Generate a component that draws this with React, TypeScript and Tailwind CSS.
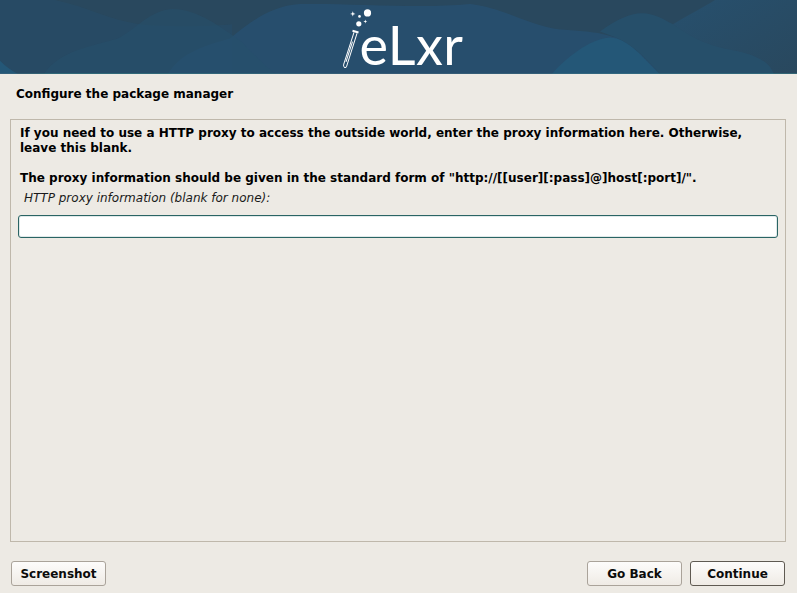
import React from 'react';

function Banner() {
  return (
    <svg className="absolute inset-0 w-full h-full" viewBox="0 0 797 73" preserveAspectRatio="none">
      <defs>
        <linearGradient id="line" x1="0" x2="1" y1="0" y2="0">
          <stop offset="0" stopColor="#4d6b80" />
          <stop offset="0.07" stopColor="#3f8f8f" />
          <stop offset="0.18" stopColor="#3f8f8f" />
          <stop offset="0.5" stopColor="#4d6b80" />
          <stop offset="1" stopColor="#3f8f95" />
        </linearGradient>
        <linearGradient id="right" x1="0" x2="1" y1="0" y2="1">
          <stop offset="0" stopColor="#25567a" stopOpacity="0.55" />
          <stop offset="1" stopColor="#25567a" stopOpacity="0" />
        </linearGradient>
      </defs>
      <rect width="797" height="73" fill="#29485e" />
      {/* top left wave */}
      <path d="M0 0 L55 0 C85 6 110 20 140 24 C170 27 210 26 232 24 L232 73 L0 73 Z" fill="#26516f" fillOpacity="0.35" />
      {/* wide hill in the middle */}
      <path d="M168 73 C180 52 205 45 230 38 C250 22 270 6 300 4 C350 3 420 9 470 4 C505 8 530 26 560 29 C590 31 600 32 616 37 C635 45 650 62 660 73 Z" fill="#26547a" fillOpacity="0.55" />
      {/* left hill */}
      <path d="M44 73 C60 50 90 46 118 38 C135 30 150 10 172 9 C198 9 222 28 240 40 C252 52 265 66 276 73 Z" fill="#26506c" fillOpacity="0.55" />
      <path d="M552 73 C565 58 590 38 610 37 C630 38 645 60 660 73 Z" fill="#245777" />
      <path d="M0 60 C6 66 12 70 18 73 L0 73 Z" fill="#245777" />
      {/* right hills */}
      <path d="M600 31 C615 20 630 13 642 13 C655 13 665 20 673 24 C690 36 705 44 725 48 C750 52 768 58 774 73 L660 73 C650 62 635 45 616 37 Z" fill="#26516f" fillOpacity="0.75" />
      <path d="M673 24 C690 14 705 6 715 0 L797 0 L797 73 L774 73 C768 58 750 52 725 48 C705 44 690 36 673 24 Z" fill="url(#right)" />
      <rect y="72.6" width="797" height="1" fill="url(#line)" />
      {/* test tube */}
      <path d="M354 32 L343.7 63.5 C342.8 66.5 345.6 67.6 346.6 65.5 L357 33" stroke="#fff" strokeWidth="1" fill="none" />
      <path d="M346 61 L352.5 41" stroke="#fff" strokeWidth="1" fill="none" />
      <path d="M352.5 30.3 L358.5 32" stroke="#fff" strokeWidth="2" fill="none" />
      {/* bubbles */}
      <g fill="#fff">
        <circle cx="367.5" cy="12.8" r="3.6" />
        <circle cx="358.8" cy="23.5" r="2.6" />
        <circle cx="359.5" cy="16.2" r="1.3" />
        <path d="M352.8 11 L353.5 13 L355.5 13.7 L353.5 14.4 L352.8 16.4 L352.1 14.4 L350.1 13.7 L352.1 13 Z" />
        <path d="M365.3 19.3 L365.8 20.8 L367.3 21.3 L365.8 21.8 L365.3 23.3 L364.8 21.8 L363.3 21.3 L364.8 20.8 Z" />
      </g>
    </svg>
  );
}

function Btn({ label, className, dark }: { label: string; className: string; dark?: boolean }) {
  return (
    <button
      className={`h-[25px] rounded-[3px] border bg-gradient-to-b from-[#fdfcfb] to-[#efebe5] text-[12px] font-bold text-[#0b0b0b] ${
        dark ? 'border-[#5f5a52]' : 'border-[#aaa39a]'
      } ${className}`}
    >
      {label}
    </button>
  );
}

export default function App() {
  return (
    <div className="w-[797px] h-[593px] overflow-hidden flex flex-col bg-[#edeae4] font-['DejaVu_Sans',sans-serif] text-[12px] text-black">
      <header className="relative h-[74px] shrink-0 flex justify-center">
        <Banner />
        <span className="relative ml-[26px] mt-[15px] h-[58px] leading-[60px] text-[54px] text-white font-['Lato',sans-serif] tracking-[0.5px]">
          eLxr
        </span>
      </header>

      <h1 className="font-bold text-[12px] leading-4 ml-4 mt-[12px]">Configure the package manager</h1>

      <main className="mx-[10px] mt-[17px] w-[776px] h-[423px] shrink-0 border border-[#bfb8ab] pl-[7px] pr-[7px] pt-[5px]">
        <p className="font-bold leading-[15px] ml-[2px] mt-[1px]">
          If you need to use a HTTP proxy to access the outside world, enter the proxy information here. Otherwise,
          <br />
          leave this blank.
        </p>
        <p className="font-bold leading-[15px] ml-[2px] mt-[15px]">
          The proxy information should be given in the standard form of "http://[[user][:pass]@]host[:port]/".
        </p>
        <label className="block italic text-[12px] leading-[15px] ml-[6px] mt-[5px] text-[#1a1a1a]">
          HTTP proxy information (blank for none):
        </label>
        <input
          type="text"
          className="block mt-[9px] w-[760px] h-[23px] bg-white rounded-[3px] border border-[#2a6464] shadow-[inset_0_0_0_1px_rgba(47,107,107,0.15)] outline-none"
        />
      </main>

      <footer className="flex mx-[11px] mt-[19px]">
        <Btn label="Screenshot" className="w-[95px]" />
        <Btn label="Go Back" className="w-[95px] ml-auto" />
        <Btn label="Continue" className="w-[95px] ml-[8px] mr-[1px]" dark />
      </footer>
    </div>
  );
}
